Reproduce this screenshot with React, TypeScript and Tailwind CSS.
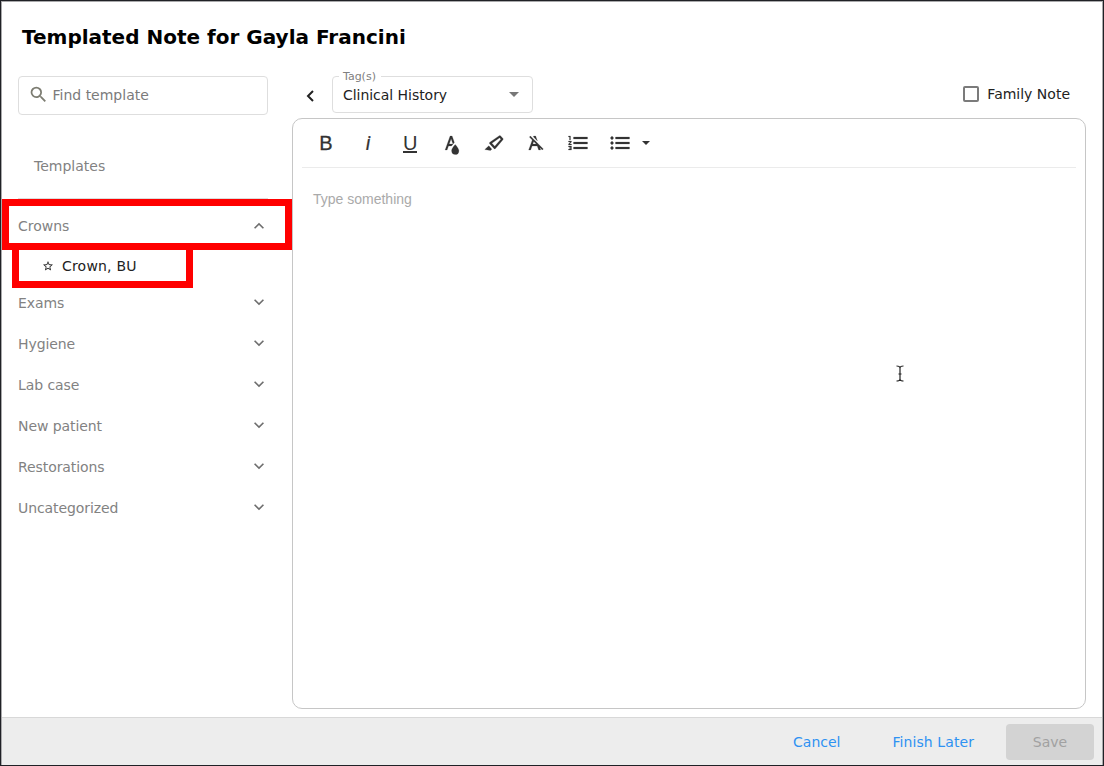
import { useState } from 'react';
import { MdExpandLess, MdExpandMore, MdSearch, MdStarBorder } from 'react-icons/md';

const categories = ['Exams', 'Hygiene', 'Lab case', 'New patient', 'Restorations', 'Uncategorized'];

const toolbarIcons = {
  textColor:
    'M15.2,13.494s-3.6,3.9-3.6,6.3a3.65,3.65,0,0,0,7.3.1v-.1C18.9,17.394,15.2,13.494,15.2,13.494Zm-1.47-1.357.669-.724L12.1,5h-2l-5,14h2l1.43-4h2.943A24.426,24.426,0,0,1,13.726,12.137ZM11.1,7.8l1.86,5.2H9.244Z',
  highlight:
    'M9.91752,12.24082l7.74791-5.39017,1.17942,1.29591-6.094,7.20747L9.91752,12.24082M7.58741,12.652l4.53533,4.98327a.93412.93412,0,0,0,1.39531-.0909L20.96943,8.7314A.90827.90827,0,0,0,20.99075,7.533l-2.513-2.76116a.90827.90827,0,0,0-1.19509-.09132L7.809,11.27135A.93412.93412,0,0,0,7.58741,12.652ZM2.7939,18.52772,8.41126,19.5l1.47913-1.34617-3.02889-3.328Z',
  clear:
    'M11.48,10.09l-1.2-1.21L8.8,7.41,6.43,5,5.37,6.1,8.25,9,4.66,19h2l1.43-4h5.14l1.43,4h2l-.89-2.51L18.27,19l1.07-1.06L14.59,13.2ZM8.8,13l.92-2.56L12.27,13Zm.56-7.15L9.66,5h2l1.75,4.9Z',
  ordered:
    'M2.5,16h2v.5h-1v1h1V18h-2v1h3V15h-3Zm1-7h1V5h-2V6h1Zm-1,2H4.3L2.5,13.1V14h3V13H3.7l1.8-2.1V10h-3Zm5-5V8h14V6Zm0,12h14V16H7.5Zm0-5h14V11H7.5Z',
  unordered:
    'M4,10.5c-.8,0-1.5.7-1.5,1.5s.7,1.5,1.5,1.5,1.5-.7,1.5-1.5S4.8,10.5,4,10.5Zm0-5c-.8,0-1.5.7-1.5,1.5S3.2,8.5,4,8.5,5.5,7.8,5.5,7,4.8,5.5,4,5.5Zm0,10c-.8,0-1.5.7-1.5,1.5s.7,1.5,1.5,1.5,1.5-.7,1.5-1.5S4.8,15.5,4,15.5ZM7.5,6V8h14V6Zm0,12h14V16H7.5Zm0-5h14V11H7.5Z',
};

const ToolbarIcon = ({ d }: { d: string }) => (
  <button className="flex w-[38px] justify-center">
    <svg viewBox="0 0 24 24" className="size-6 fill-[#333] stroke-[#333] stroke-[0.2]">
      <path d={d} />
    </svg>
  </button>
);

const Caret = ({ className }: { className: string }) => (
  <svg viewBox="0 0 10 5" className={className}>
    <path d="M0 0h10L5 5z" />
  </svg>
);

const Sidebar = () => (
  <aside className="w-[250px] shrink-0 text-[#828282]">
    <div className="flex h-[39px] items-center rounded border border-[#dedede] pl-[9px]">
      <MdSearch className="mb-0.5 size-[21px] text-[#7d7d72]" />
      <input
        className="mb-0.5 ml-[3.5px] w-[200px] outline-none placeholder:text-[#7b7b7b]"
        placeholder="Find template"
      />
    </div>
    <div className="mt-8 flex h-[52px] items-start border-b border-[#dcdcdc] pt-[9px] pl-4">
      Templates
    </div>

    <div className="mt-1.5 flex h-[41px] items-center justify-between">
      <span>Crowns</span>
      <MdExpandLess className="-mr-px size-5 text-[#6e6e6e]" />
    </div>
    <div className="flex h-9 items-center gap-2 pt-1 pl-6 tracking-[0.2px] text-[#222]">
      <MdStarBorder className="size-3" />
      <span>Crown, BU</span>
    </div>
    {categories.map((name) => (
      <div key={name} className="flex h-[41px] items-center justify-between tracking-[-0.08px]">
        <span>{name}</span>
        <MdExpandMore className="-mr-px mb-0.5 size-5 text-[#6e6e6e]" />
      </div>
    ))}
  </aside>
);

const Editor = () => (
  <div className="flex flex-1 flex-col rounded-[10px] border border-[#c6c6c6] px-[9px]">
    <div className="flex h-[49px] items-center gap-1 border-b border-[#ebebeb] pl-[5px] text-[#333]">
      <button className="w-[38px] font-['Liberation_Sans',Arial,sans-serif] text-[20px] leading-6 [-webkit-text-stroke:0.3px]">
        B
      </button>
      <button className="w-[38px] font-[Roboto,sans-serif] text-[20px] leading-6 italic [-webkit-text-stroke:0.2px]">
        i
      </button>
      <button className="flex w-[38px] justify-center">
        <span className="h-[19px] w-3.5 border-b-2 font-['Liberation_Sans',Arial,sans-serif] text-[20px] leading-[18px]">
          U
        </span>
      </button>
      <ToolbarIcon d={toolbarIcons.textColor} />
      <ToolbarIcon d={toolbarIcons.highlight} />
      <ToolbarIcon d={toolbarIcons.clear} />
      <ToolbarIcon d={toolbarIcons.ordered} />
      <ToolbarIcon d={toolbarIcons.unordered} />
      <Caret className="-ml-px h-1 w-2 fill-[#333]" />
    </div>
    <p className="pt-[21px] pl-[11px] font-['Liberation_Sans',Arial,sans-serif] text-sm text-[#aaa]">
      Type something
    </p>
  </div>
);

export default function App() {
  const [family, setFamily] = useState(false);

  return (
    <div className="relative h-[766px] w-[1104px] border border-[#202126] bg-white font-['DejaVu_Sans',Verdana,sans-serif] text-sm leading-5">
      <div className="flex h-full flex-col border-x border-t border-[#a9a9ab]">
        <h1 className="h-[74px] pt-[21px] pl-5 text-[20px] leading-7 font-bold text-black">
          Templated Note for Gayla Francini
        </h1>

        <div className="flex flex-1 pr-4 pb-2 pl-4">
          <Sidebar />

          <main className="ml-6 flex flex-1 flex-col">
            <div className="flex h-[42px] items-start">
              <svg viewBox="0 0 8 12" className="mt-3.5 ml-[13.5px] h-3 w-2 fill-none stroke-[#222] stroke-2">
                <path d="M7 1L2 6l5 5" />
              </svg>
              <div className="relative ml-[18.5px] flex h-[37px] w-[201px] items-center justify-between rounded border border-[#dedede] pr-[13px] pl-2.5 text-[#222]">
                <span className="absolute -top-1.5 left-1.5 bg-white pr-[5px] pl-1 text-[11px] leading-3 text-[#808080]">
                  Tag(s)
                </span>
                <span className="tracking-[-0.04px]">Clinical History</span>
                <Caret className="h-[5px] w-2.5 fill-[#777]" />
              </div>
              <button
                className="mt-2 mr-4 ml-auto flex items-center gap-2 text-[#222]"
                onClick={() => setFamily(!family)}
              >
                <span className="size-4 rounded-[2px] border-2 border-[#7b7b7b]">
                  {family && <span className="block size-full bg-[#7b7b7b]" />}
                </span>
                Family Note
              </button>
            </div>
            <Editor />
          </main>
        </div>

        <footer className="flex h-12 items-center justify-end border-t border-[#d8d8d8] bg-[#ededed] pr-2 text-[#2e92f2]">
          <button>Cancel</button>
          <button className="ml-[52px] tracking-[0.08px]">Finish Later</button>
          <button className="ml-8 h-9 w-[88px] rounded bg-[#d3d3d3] text-[#a1a1a1]">Save</button>
        </footer>
      </div>

      {/* callouts around the open category and its template */}
      <div className="absolute top-[242px] left-[11px] h-[45px] w-[181px] border-[7px] border-[#f00]" />
      <div className="absolute top-[198px] left-px h-[51px] w-[290px] border-[7px] border-[#f00]" />

      {/* text cursor */}
      <svg
        viewBox="0 0 9 17"
        className="absolute top-[364px] left-[894px] h-[17px] w-[9px] fill-none stroke-[#222] stroke-[1.2]"
      >
        <path d="M1.5 1q3 0 3.5 1.7Q5.5 1 8.5 1M5 2v13M1.5 16q3 0 3.5-1.7q.5 1.7 3.5 1.7M3.5 9h3" />
      </svg>
    </div>
  );
}
